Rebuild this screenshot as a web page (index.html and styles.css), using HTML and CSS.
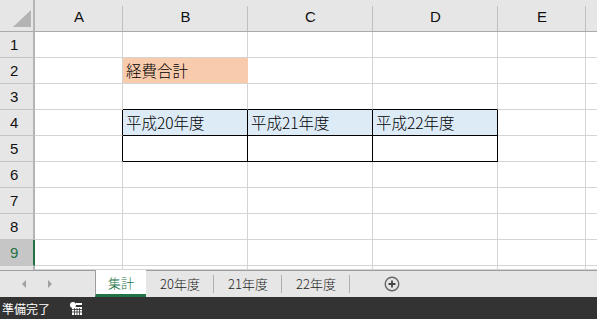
FILE: index.html
```html
<!DOCTYPE html>
<html lang="ja">
<head>
    <meta charset="UTF-8">
    <meta name="viewport" content="width=device-width, initial-scale=1.0">
    <title>経費合計</title>
    <link rel="stylesheet" href="styles.css">
</head>
<body>
    <div class="sheet">
        <!-- column headers -->
        <div class="corner"><span class="corner-tri"></span></div>
        <div class="colhead">A</div>
        <div class="colhead">B</div>
        <div class="colhead">C</div>
        <div class="colhead">D</div>
        <div class="colhead">E</div>
        <div class="colhead"></div>

        <div class="rowhead">1</div>
        <div class="cell"></div><div class="cell"></div><div class="cell"></div><div class="cell"></div><div class="cell"></div><div class="cell"></div>

        <div class="rowhead">2</div>
        <div class="cell"></div><div class="cell total">経費合計</div><div class="cell"></div><div class="cell"></div><div class="cell"></div><div class="cell"></div>

        <div class="rowhead">3</div>
        <div class="cell"></div><div class="cell bb"></div><div class="cell bb"></div><div class="cell bb"></div><div class="cell"></div><div class="cell"></div>

        <div class="rowhead">4</div>
        <div class="cell br"></div>
        <div class="cell box year">平成20年度</div>
        <div class="cell box year">平成21年度</div>
        <div class="cell box year">平成22年度</div>
        <div class="cell"></div><div class="cell"></div>

        <div class="rowhead">5</div>
        <div class="cell br"></div><div class="cell box"></div><div class="cell box"></div><div class="cell box"></div><div class="cell"></div><div class="cell"></div>

        <div class="rowhead">6</div>
        <div class="cell"></div><div class="cell"></div><div class="cell"></div><div class="cell"></div><div class="cell"></div><div class="cell"></div>

        <div class="rowhead">7</div>
        <div class="cell"></div><div class="cell"></div><div class="cell"></div><div class="cell"></div><div class="cell"></div><div class="cell"></div>

        <div class="rowhead">8</div>
        <div class="cell"></div><div class="cell"></div><div class="cell"></div><div class="cell"></div><div class="cell"></div><div class="cell"></div>

        <div class="rowhead active">9</div>
        <div class="cell"></div><div class="cell"></div><div class="cell"></div><div class="cell"></div><div class="cell"></div><div class="cell"></div>

        <div class="rowhead"></div>
        <div class="cell"></div><div class="cell"></div><div class="cell"></div><div class="cell"></div><div class="cell"></div><div class="cell"></div>
    </div>

    <div class="tabs">
        <div class="nav">
            <span class="arrow left"></span>
            <span class="arrow right"></span>
        </div>
        <div class="tab current">集計</div>
        <div class="tab">20年度</div>
        <div class="tab">21年度</div>
        <div class="tab">22年度</div>
        <div class="add">
            <svg width="16" height="16" viewBox="0 0 16 16">
                <circle cx="8" cy="8" r="6.8" fill="none" stroke="#666" stroke-width="1.4"/>
                <path d="M8 4.5v7M4.5 8h7" stroke="#444" stroke-width="1.8"/>
            </svg>
        </div>
    </div>

    <div class="status">
        <span class="ready">準備完了</span>
        <svg class="status-icon" width="14" height="15" viewBox="0 0 14 15">
            <circle cx="4" cy="4" r="3" fill="#fff"/>
            <rect x="7" y="2" width="6" height="2" fill="#fff"/>
            <rect x="3" y="6" width="10" height="8" fill="#fff"/>
            <path d="M3 8.5h10M3 11h10M5.5 7v7M8 7v7M10.5 7v7" stroke="#333" stroke-width="0.8"/>
        </svg>
    </div>
</body>
</html>
```

FILE: styles.css
```css
body {
    margin: 0;
    width: 597px;
    height: 319px;
    overflow: hidden;
    font-family: "Noto Sans CJK JP", "Noto Sans", sans-serif;
    background-color: #fff;
}

.sheet {
    display: grid;
    grid-template-columns: 35px 88px 125px 125px 125px 88px 12px;
    grid-template-rows: 32px repeat(9, 26px) 4px;
    overflow: hidden;
}

.corner {
    background-color: #e6e6e6;
    border-right: 2px solid #b4b4b4;
    border-bottom: 1px solid #ababab;
    box-sizing: border-box;
    padding: 10px 0 0 13px;
}

.corner-tri {
    display: block;
    width: 0;
    height: 0;
    border-left: 18px solid transparent;
    border-bottom: 17px solid #b3b3b3;
}

.colhead {
    background: linear-gradient(#c0c0c0, #c0c0c0) right bottom / 1px 25px no-repeat, #e6e6e6;
    border-bottom: 1px solid #ababab;
    box-sizing: border-box;
    font-family: "Liberation Sans", Arial, sans-serif;
    font-size: 15px;
    color: #111;
    text-align: center;
    padding-top: 8px;
}

.rowhead {
    background-color: #e6e6e6;
    border-right: 2px solid #b4b4b4;
    border-bottom: 1px solid #c4c4c4;
    box-sizing: border-box;
    font-family: "Liberation Sans", Arial, sans-serif;
    font-size: 15px;
    color: #111;
    padding: 4px 0 0 10px;
}

.rowhead.active {
    background-color: #c6c6c6;
    color: #217346;
    border-right-color: #217346;
}

.cell {
    border-right: 1px solid #d4d4d4;
    border-bottom: 1px solid #d4d4d4;
    box-sizing: border-box;
    font-size: 15.5px;
    font-weight: 300;
    color: #000;
    padding: 0 0 0 3px;
    line-height: 25px;
    white-space: nowrap;
}

.total {
    background-color: #f8cbad;
    border-right-color: #f8cbad;
}

.bb {
    border-bottom-color: #000;
}

.br {
    border-right-color: #000;
}

.box {
    border-right-color: #000;
    border-bottom-color: #000;
}

.year {
    background-color: #ddebf7;
}

.tabs {
    display: flex;
    height: 27px;
    box-sizing: border-box;
    background-color: #e6e6e6;
    border-top: 1px solid #9e9e9e;
    font-size: 13px;
    font-weight: 300;
    color: #222;
}

.nav {
    width: 95px;
    display: flex;
    align-items: center;
    gap: 22px;
    padding-left: 22px;
    box-sizing: border-box;
}

.arrow {
    width: 0;
    height: 0;
    border-top: 4px solid transparent;
    border-bottom: 4px solid transparent;
}

.arrow.left {
    border-right: 4px solid #a0a0a0;
}

.arrow.right {
    border-left: 4px solid #a0a0a0;
}

.tab {
    width: 68px;
    display: flex;
    align-items: center;
    justify-content: center;
    padding-bottom: 2px;
    box-sizing: border-box;
}

.tab + .tab {
    background: linear-gradient(#b0b0b0, #b0b0b0) right 4px / 1px 18px no-repeat;
}

.tab.current {
    width: 51px;
    margin-top: -1px;
    background-color: #fff;
    border-left: 1px solid #9e9e9e;
    border-bottom: 3px solid #217346;
    color: #217346;
    padding-bottom: 0;
}

.add {
    display: flex;
    align-items: center;
    padding: 0 0 1px 34px;
}

.status {
    height: 22px;
    display: flex;
    align-items: center;
    background-color: #333;
    color: #fff;
    font-size: 12px;
    padding-left: 2px;
}

.status-icon {
    margin-left: 19px;
}
```
